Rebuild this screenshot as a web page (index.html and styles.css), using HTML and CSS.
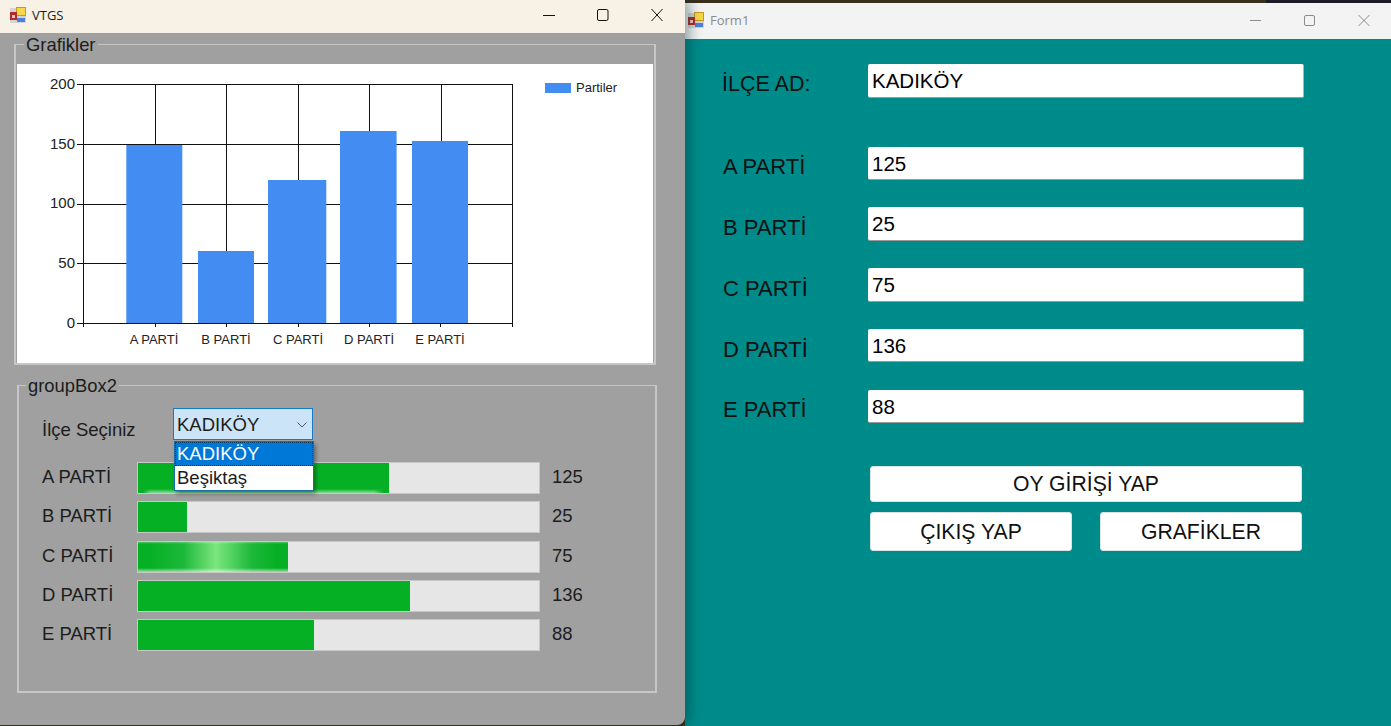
FILE: index.html
```html
<!DOCTYPE html>
<html lang="en">
<head>
    <meta charset="UTF-8">
    <meta name="viewport" content="width=device-width, initial-scale=1.0">
    <title>VTGS</title>
    <link rel="stylesheet" href="styles.css">
</head>
<body>

    <svg class="svg-defs" width="0" height="0">
        <symbol id="app-icon" viewBox="0 0 16 16">
            <rect x="0" y="1" width="16" height="15" fill="#d4d4d8"/>
            <rect x="6" y="0" width="10" height="9" fill="#c79a1e"/>
            <rect x="7" y="1" width="8" height="7" fill="#f7d84a"/>
            <rect x="0" y="5" width="7" height="8" fill="#b22a2a"/>
            <rect x="2" y="8" width="3" height="3" fill="#f4c4c4"/>
            <rect x="7" y="11" width="8" height="4" fill="#4f7fd8"/>
        </symbol>
    </svg>

    <div class="desktop">

        <!-- chart window -->
        <div class="window vtgs">
            <div class="titlebar vtgs-title">
                <svg class="app-icon"><use href="#app-icon"/></svg>
                <span class="title-text">VTGS</span>
                <div class="title-buttons">
                    <svg width="54" height="14" viewBox="0 0 54 14"><path d="M0 7.5H12" stroke="#111" fill="none"/></svg>
                    <svg width="54" height="14" viewBox="0 0 54 14"><rect x="0.5" y="1.5" width="10.5" height="11" rx="1.5" stroke="#111" fill="none"/></svg>
                    <svg width="12" height="14" viewBox="0 0 12 14"><path d="M0.5 1L11.5 13M11.5 1L0.5 13" stroke="#111" fill="none"/></svg>
                </div>
            </div>

            <div class="vtgs-body">
                <div class="group group-chart">
                    <span class="group-label">Grafikler</span>
                    <svg class="chart" width="636" height="299" viewBox="17 64 636 299">
                        <g stroke="#111" stroke-width="1" shape-rendering="crispEdges">
                            <path d="M155 84V323M226 84V323M298 84V323M369 84V323M441 84V323"/>
                            <path d="M83 144H512M83 204H512M83 263H512"/>
                        </g>
                        <g fill="#428cf2">
                            <rect x="126.3" y="145" width="56" height="178"/>
                            <rect x="198" y="251" width="56" height="72"/>
                            <rect x="268" y="180" width="58.3" height="143"/>
                            <rect x="340" y="131" width="56.6" height="192"/>
                            <rect x="412" y="141" width="56" height="182"/>
                        </g>
                        <g stroke="#111" stroke-width="1" shape-rendering="crispEdges" fill="none">
                            <path d="M83 84H512V323H83Z"/>
                            <path d="M77 84H83M77 144H83M77 204H83M77 263H83M77 323H83"/>
                            <path d="M155 323V327M226 323V327M298 323V327M369 323V327M440 323V327M83 323V327M512 323V327"/>
                        </g>
                        <g class="axis-y" text-anchor="end">
                            <text x="75" y="89">200</text>
                            <text x="75" y="149">150</text>
                            <text x="75" y="208">100</text>
                            <text x="75" y="268">50</text>
                            <text x="75" y="328">0</text>
                        </g>
                        <g class="axis-x" text-anchor="middle">
                            <text x="154" y="344">A PARTİ</text>
                            <text x="226" y="344">B PARTİ</text>
                            <text x="298" y="344">C PARTİ</text>
                            <text x="369" y="344">D PARTİ</text>
                            <text x="440" y="344">E PARTİ</text>
                        </g>
                        <rect x="545" y="83" width="26" height="10" fill="#428cf2"/>
                        <text class="legend-text" x="576" y="92">Partiler</text>
                    </svg>
                </div>

                <div class="group group-votes">
                    <span class="group-label">groupBox2</span>

                    <div class="district-row">
                        <span class="district-label">İlçe Seçiniz</span>
                        <div class="combo">
                            <span>KADIKÖY</span>
                            <svg width="10" height="6" viewBox="0 0 10 6"><path d="M0.5 0.5L5 5L9.5 0.5" stroke="#555" fill="none"/></svg>
                            <ul class="combo-list">
                                <li class="selected">KADIKÖY</li>
                                <li>Beşiktaş</li>
                            </ul>
                        </div>
                    </div>

                    <div class="vote-rows">
                        <div class="vote-row">
                            <span class="party">A PARTİ</span>
                            <div class="track"><div class="fill shine-low" style="width: 62.5%"></div></div>
                            <span class="count">125</span>
                        </div>
                        <div class="vote-row">
                            <span class="party">B PARTİ</span>
                            <div class="track"><div class="fill" style="width: 12.2%"></div></div>
                            <span class="count">25</span>
                        </div>
                        <div class="vote-row">
                            <span class="party">C PARTİ</span>
                            <div class="track"><div class="fill shine" style="width: 37.3%"></div></div>
                            <span class="count">75</span>
                        </div>
                        <div class="vote-row">
                            <span class="party">D PARTİ</span>
                            <div class="track"><div class="fill" style="width: 67.8%"></div></div>
                            <span class="count">136</span>
                        </div>
                        <div class="vote-row">
                            <span class="party">E PARTİ</span>
                            <div class="track"><div class="fill" style="width: 44%"></div></div>
                            <span class="count">88</span>
                        </div>
                    </div>
                </div>
            </div>
        </div>

        <!-- entry window -->
        <div class="window form1">
            <div class="titlebar form1-title">
                <svg class="app-icon"><use href="#app-icon"/></svg>
                <span class="title-text">Form1</span>
                <div class="title-buttons">
                    <svg width="54" height="14" viewBox="0 0 54 14"><path d="M0 7.5H11" stroke="#8c8c8c" fill="none"/></svg>
                    <svg width="54" height="14" viewBox="0 0 54 14"><rect x="0.5" y="2.5" width="10" height="10" rx="1.5" stroke="#8c8c8c" fill="none"/></svg>
                    <svg width="12" height="14" viewBox="0 0 12 14"><path d="M0.5 2L11.5 13M11.5 2L0.5 13" stroke="#8c8c8c" fill="none"/></svg>
                </div>
            </div>

            <div class="form1-body">
                <div class="field field-first">
                    <label>İLÇE AD:</label>
                    <div class="textbox">KADIKÖY</div>
                </div>
                <div class="field">
                    <label>A PARTİ</label>
                    <div class="textbox">125</div>
                </div>
                <div class="field">
                    <label>B PARTİ</label>
                    <div class="textbox">25</div>
                </div>
                <div class="field">
                    <label>C PARTİ</label>
                    <div class="textbox">75</div>
                </div>
                <div class="field">
                    <label>D PARTİ</label>
                    <div class="textbox">136</div>
                </div>
                <div class="field">
                    <label>E PARTİ</label>
                    <div class="textbox">88</div>
                </div>

                <div class="actions">
                    <button class="btn btn-wide">OY GİRİŞİ YAP</button>
                    <button class="btn btn-half">ÇIKIŞ YAP</button>
                    <button class="btn btn-half">GRAFİKLER</button>
                </div>
            </div>
        </div>

    </div>

</body>
</html>
```

FILE: styles.css
```css
html, body {
    margin: 0;
    padding: 0;
}
body {
    font-family: "Liberation Sans", Arial, sans-serif;
    color: #1c1c1c;
    overflow: hidden;
}
.svg-defs {
    position: absolute;
}
.desktop {
    display: flex;
    width: 1391px;
    height: 726px;
    overflow: hidden;
    background: linear-gradient(to right, #3a2f1c 91%, #1c1c28 91%);
}

/* windows */
.window {
    display: flex;
    flex-direction: column;
}
.vtgs {
    position: relative;
    z-index: 2;
    width: 685px;
    height: 725px;
    background-color: #a0a0a0;
    border-radius: 0 0 8px 0;
    box-shadow: 4px 0 14px rgba(0, 50, 50, 0.45);
}
.form1 {
    flex: 1;
    margin-top: 3px;
    background-color: #008b8b;
}
.titlebar {
    display: flex;
    align-items: center;
    flex-shrink: 0;
    box-sizing: border-box;
}
.vtgs-title {
    height: 33px;
    padding: 0 22px 3px 10px;
    background-color: #f8f1e6;
}
.form1-title {
    height: 36px;
    padding: 0 21px 2px 3px;
    background-color: #f3f3f3;
    color: #8a8a8a;
}
.app-icon {
    width: 16px;
    height: 16px;
    flex-shrink: 0;
}
.title-text {
    margin-left: 6px;
    font-family: "Open Sans", sans-serif;
    font-size: 13px;
}
.title-buttons {
    display: flex;
    margin-left: auto;
}

/* left window */
.vtgs-body {
    padding: 11px 0 0 14px;
}
.group {
    position: relative;
    box-sizing: border-box;
    border: 2px solid #c6c6c6;
    border-top-width: 1px;
}
.group-label {
    position: absolute;
    top: -10px;
    padding: 0 2px;
    font-size: 18.4px;
    line-height: 20px;
    background-color: #a0a0a0;
}
.group-chart {
    width: 642px;
    height: 321px;
    padding: 19px 1px 0;
}
.group-chart .group-label {
    left: 8px;
}
.chart {
    display: block;
    background-color: #fff;
}
.axis-y text {
    font-size: 15px;
    fill: #222;
}
.axis-x text {
    font-size: 13px;
    fill: #222;
}
.legend-text {
    font-size: 13px;
    fill: #222;
}
.group-votes {
    width: 640px;
    height: 308px;
    margin: 20px 0 0 3px;
    padding: 22px 0 0 23px;
}
.group-votes .group-label {
    left: 7px;
}
.district-row {
    display: flex;
    align-items: center;
    height: 32px;
    font-size: 18.5px;
}
.district-label {
    width: 131px;
    padding-top: 12px;
}
.combo {
    position: relative;
    box-sizing: border-box;
    display: flex;
    align-items: center;
    justify-content: space-between;
    width: 140px;
    height: 32px;
    padding: 1px 5px 0 3px;
    background-color: #cce4f7;
    border: 1px solid #1a78c8;
    font-size: 18.5px;
}
.combo-list {
    position: absolute;
    top: 32px;
    left: 0;
    box-sizing: border-box;
    width: 140px;
    margin: 0;
    padding: 0;
    list-style: none;
    background-color: #fff;
    border: 1px solid #1a6ea8;
    box-shadow: 2px 3px 4px rgba(0, 0, 0, 0.35);
}
.combo-list li {
    height: 24px;
    padding-left: 2px;
    line-height: 24px;
}
.combo-list .selected {
    background-color: #0078d7;
    color: #fff;
    outline: 1px dotted #0a3c66;
    outline-offset: -1px;
}
.vote-rows {
    display: flex;
    flex-direction: column;
    gap: 7.25px;
    margin-top: 22px;
}
.vote-row {
    display: flex;
    align-items: center;
    height: 32px;
    font-size: 18.5px;
}
.party {
    width: 95px;
    padding-bottom: 2px;
}
.track {
    box-sizing: border-box;
    width: 403px;
    height: 100%;
    background-color: #e6e6e6;
    border: 1px solid #c8c8c8;
}
.fill {
    height: 100%;
    background-color: #06b025;
}
.shine {
    background-image:
        linear-gradient(to top, rgba(255, 255, 255, 0.6), rgba(255, 255, 255, 0) 4px),
        linear-gradient(to bottom, rgba(255, 255, 255, 0.3), rgba(255, 255, 255, 0) 2px),
        linear-gradient(to right, #06b025 8%, #1cb83a 30%, #7ce67e 52%, #1cb83a 76%, #06b025 92%);
}
.shine-low {
    background-image:
        linear-gradient(to right, #06b025 2%, transparent 5%, transparent 94%, #06b025 98%),
        linear-gradient(to top, rgba(255, 255, 255, 0.55), rgba(255, 255, 255, 0) 4px);
}
.count {
    margin-left: 12px;
    padding-bottom: 2px;
}

/* right window */
.form1-body {
    padding: 25px 0 0 37px;
}
.field {
    display: flex;
    align-items: center;
    height: 33.5px;
    margin-bottom: 27.25px;
}
.field-first {
    margin-bottom: 49px;
}
.field label {
    box-sizing: border-box;
    width: 146px;
    padding: 8px 0 0 1px;
    font-size: 22px;
    color: #111;
}
.field-first label {
    padding: 7px 0 0;
    font-size: 21.5px;
}
.textbox {
    box-sizing: border-box;
    width: 436px;
    height: 100%;
    padding-left: 4px;
    background-color: #fff;
    border-radius: 2px;
    border-bottom: 1px solid #9a9a9a;
    border-right: 1px solid #b5b5b5;
    font-size: 20.5px;
    line-height: 34px;
    color: #000;
}
.actions {
    display: flex;
    flex-wrap: wrap;
    justify-content: space-between;
    width: 432px;
    row-gap: 10px;
    margin: 43px 0 0 148px;
}
.btn {
    padding: 0;
    background-color: #fff;
    border: 1px solid #d9e4e4;
    border-radius: 3px;
    font-family: inherit;
    font-size: 21.2px;
    color: #111;
}
.btn-wide {
    width: 100%;
    height: 36px;
}
.btn-half {
    width: 202px;
    height: 39px;
}
```
